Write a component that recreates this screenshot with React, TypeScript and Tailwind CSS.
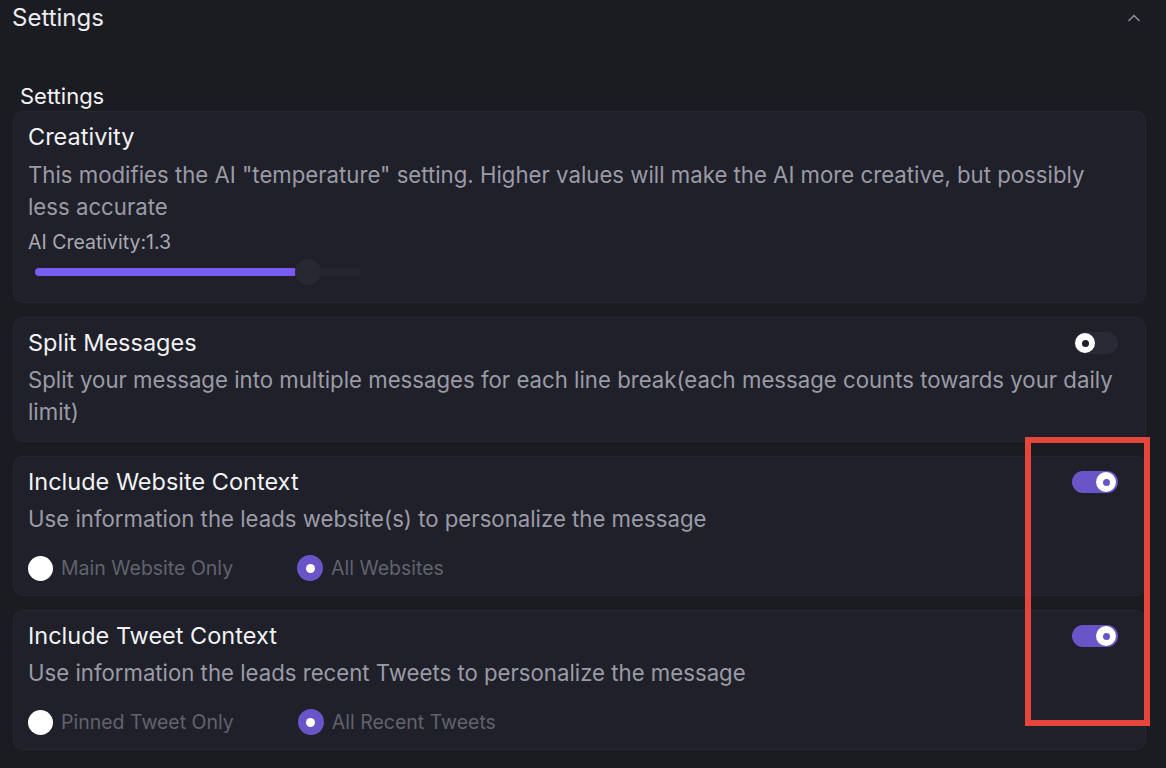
import React from 'react';
import { ChevronUp } from 'lucide-react';

const font = { fontFamily: 'Inter, "Noto Sans", sans-serif' };

const Toggle = ({ on }: { on: boolean }) => (
  <div
    className={`relative h-[22px] shrink-0 rounded-full ${on ? 'w-[46px] bg-[#6a55c8]' : 'w-[44px] bg-[#2a2a36]'}`}
  >
    <div
      className={`absolute top-px flex h-[20px] w-[20px] items-center justify-center rounded-full bg-white ${on ? 'right-[2px]' : 'left-px'}`}
    >
      <div className={`h-[7px] w-[7px] rounded-full ${on ? 'bg-[#6a55c8]' : 'bg-[#1f2029]'}`} />
    </div>
  </div>
);

const Radio = ({ checked, label }: { checked: boolean; label: string }) => (
  <label className="flex items-center gap-[8px]">
    {checked ? (
      <span className="flex h-[26px] w-[26px] items-center justify-center rounded-full bg-[#6a55c8]">
        <span className="h-[9px] w-[9px] rounded-full bg-white" />
      </span>
    ) : (
      <span className="h-[25px] w-[25px] rounded-full bg-white" />
    )}
    <span className="text-[19.5px] leading-[26px] text-[#62626f]">{label}</span>
  </label>
);

const Card = ({ children }: { children: React.ReactNode }) => (
  <div className="rounded-[10px] border border-[#262731] bg-[#1f2029] px-[14px]">{children}</div>
);

export default function App() {
  return (
    <div className="relative min-h-[768px] w-[1166px] overflow-hidden bg-[#1b1c22] text-white" style={font}>
      {/* header */}
      <div className="flex h-[35px] items-center justify-between pl-[12px] pr-[22px]">
        <span className="text-[24px] text-[#ececef]">Settings</span>
        <ChevronUp size={20} strokeWidth={2} className="text-[#8a8a96]" />
      </div>

      <div className="mt-[47px] pl-[20px] text-[22px] leading-[28px] text-[#f2f2f4]">Settings</div>

      <div className="mt-px flex w-[1146px] flex-col gap-[14px] pl-[13px]">
        {/* creativity */}
        <Card>
          <div className="pt-[9px] text-[23.5px] leading-[32px] text-[#f2f2f4]">Creativity</div>
          <p className="mt-[6px] pr-[12px] text-[22.2px] leading-[32px] text-[#9b9ba7]">
            This modifies the AI "temperature" setting. Higher values will make the AI more creative, but possibly less accurate
          </p>
          <div className="mt-[8px] text-[19.5px] leading-[22px] text-[#a9a9b4]">AI Creativity:1.3</div>
          <div className="relative ml-[7px] mt-[6px] mb-[17px] h-[26px] w-[326px]">
            <div className="absolute left-0 right-0 top-[9px] h-[8px] rounded-full bg-[#262632]" />
            <div className="absolute left-0 top-[9px] h-[8px] w-[262px] rounded-full bg-[#7a5cf0]" />
            <div className="absolute left-[260px] top-0 h-[26px] w-[26px] rounded-full bg-[#282833]" />
          </div>
        </Card>

        {/* split messages */}
        <Card>
          <div className="flex items-center justify-between pt-[9px] pr-[13px]">
            <span className="text-[23.5px] leading-[32px] text-[#f2f2f4]">Split Messages</span>
            <Toggle on={false} />
          </div>
          <p className="mt-[5px] pb-[13px] pr-[12px] text-[22.2px] leading-[32px] text-[#9b9ba7]">
            Split your message into multiple messages for each line break(each message counts towards your daily limit)
          </p>
        </Card>

        {/* website context */}
        <Card>
          <div className="flex items-center justify-between pt-[9px] pr-[13px]">
            <span className="text-[23.5px] leading-[32px] text-[#f2f2f4]">Include Website Context</span>
            <Toggle on />
          </div>
          <p className="mt-[5px] text-[22.2px] leading-[32px] text-[#9b9ba7]">
            Use information the leads website(s) to personalize the message
          </p>
          <div className="mt-[20px] flex items-center gap-[64px] pb-[14px]">
            <Radio checked={false} label="Main Website Only" />
            <Radio checked label="All Websites" />
          </div>
        </Card>

        {/* tweet context */}
        <Card>
          <div className="flex items-center justify-between pt-[9px] pr-[13px]">
            <span className="text-[23.5px] leading-[32px] text-[#f2f2f4]">Include Tweet Context</span>
            <Toggle on />
          </div>
          <p className="mt-[5px] text-[22.2px] leading-[32px] text-[#9b9ba7]">
            Use information the leads recent Tweets to personalize the message
          </p>
          <div className="mt-[20px] flex items-center gap-[64px] pb-[14px]">
            <Radio checked={false} label="Pinned Tweet Only" />
            <Radio checked label="All Recent Tweets" />
          </div>
        </Card>
      </div>

      {/* highlight box */}
      <div className="absolute left-[1025px] top-[437px] h-[289px] w-[125px] border-[6px] border-[#e4463b]" />
    </div>
  );
}
